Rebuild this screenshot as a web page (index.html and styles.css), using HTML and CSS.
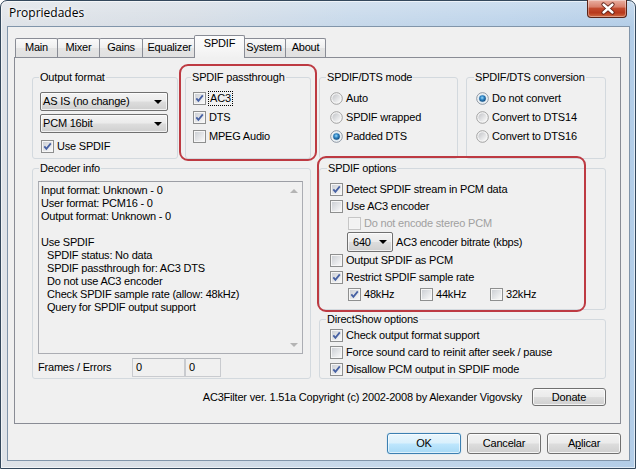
FILE: index.html
```html
<!DOCTYPE html>
<html>
<head>
<meta charset="utf-8">
<title>Propriedades</title>
<link rel="stylesheet" href="styles.css">
</head>
<body>
<svg class="defs" width="0" height="0" aria-hidden="true">
  <defs>
    <linearGradient id="cbg" x1="0" y1="0" x2="1" y2="1">
      <stop offset="0" stop-color="#cdd0d5"/>
      <stop offset="1" stop-color="#f8f8f8"/>
    </linearGradient>
    <linearGradient id="rbg" x1="0" y1="0" x2="1" y2="1">
      <stop offset="0" stop-color="#c3c5c9"/>
      <stop offset="1" stop-color="#fbfbfb"/>
    </linearGradient>
    <radialGradient id="rdot" cx="0.45" cy="0.4" r="0.65">
      <stop offset="0" stop-color="#9fdcfb"/>
      <stop offset="0.45" stop-color="#2f86c6"/>
      <stop offset="1" stop-color="#0c3c6c"/>
    </radialGradient>
  </defs>
</svg>

<div class="window">
  <div class="titlebar">
    <span class="title">Propriedades</span>
    <div class="close">
      <svg width="40" height="17" viewBox="0 0 40 17">
        <path d="M15.5 4.5 L24.5 12.5 M24.5 4.5 L15.5 12.5" stroke="#5b1c12" stroke-width="4.2" stroke-linecap="round" fill="none"/>
        <path d="M15.5 4.5 L24.5 12.5 M24.5 4.5 L15.5 12.5" stroke="#ffffff" stroke-width="2.4" stroke-linecap="round" fill="none"/>
      </svg>
    </div>
  </div>

  <div class="client">
    <div class="tabs">
      <div class="tab t-main">Main</div>
      <div class="tab t-mixer">Mixer</div>
      <div class="tab t-gains">Gains</div>
      <div class="tab t-eq">Equalizer</div>
      <div class="tab active t-spdif">SPDIF</div>
      <div class="tab t-system">System</div>
      <div class="tab t-about">About</div>
    </div>

    <div class="panel">
      <div class="main">
        <div class="col left">
          <div class="row row-left">
            <fieldset class="grp g-out">
              <legend class="lg-6">Output format</legend>
              <div class="body b-out">
                <div class="select s-wide"><span class="sel-text">AS IS (no change)</span><span class="arrow"></span></div>
                <div class="select s-wide s-second"><span class="sel-text">PCM 16bit</span><span class="arrow"></span></div>
                <div class="opt use-spdif">
                  <svg class="cb" viewBox="0 0 13 13"><rect x=".5" y=".5" width="12" height="12" fill="#f6f6f6" stroke="#8e8f8f"/><rect x="2" y="2" width="9" height="9" fill="url(#cbg)"/><path d="M3.3 6.4 5.4 8.9 9.8 3.4" fill="none" stroke="#4761a3" stroke-width="1.8"/></svg>
                  <span>Use SPDIF</span>
                </div>
              </div>
            </fieldset>
            <fieldset class="grp g-pass">
              <legend class="lg-5">SPDIF passthrough</legend>
              <div class="body b-pass">
                <div class="opt tall">
                  <svg class="cb" viewBox="0 0 13 13"><rect x=".5" y=".5" width="12" height="12" fill="#f6f6f6" stroke="#8e8f8f"/><rect x="2" y="2" width="9" height="9" fill="url(#cbg)"/><path d="M3.3 6.4 5.4 8.9 9.8 3.4" fill="none" stroke="#4761a3" stroke-width="1.8"/></svg>
                  <span class="focus">AC3</span>
                </div>
                <div class="opt tall">
                  <svg class="cb" viewBox="0 0 13 13"><rect x=".5" y=".5" width="12" height="12" fill="#f6f6f6" stroke="#8e8f8f"/><rect x="2" y="2" width="9" height="9" fill="url(#cbg)"/><path d="M3.3 6.4 5.4 8.9 9.8 3.4" fill="none" stroke="#4761a3" stroke-width="1.8"/></svg>
                  <span>DTS</span>
                </div>
                <div class="opt tall">
                  <svg class="cb" viewBox="0 0 13 13"><rect x=".5" y=".5" width="12" height="12" fill="#f6f6f6" stroke="#8e8f8f"/><rect x="2" y="2" width="9" height="9" fill="url(#cbg)"/></svg>
                  <span>MPEG Audio</span>
                </div>
              </div>
            </fieldset>
          </div>

          <fieldset class="grp g-dec">
            <legend class="lg-6">Decoder info</legend>
            <div class="body b-dec">
              <div class="memo">
                <div class="memo-text">
                  <div>Input format: Unknown - 0</div>
                  <div>User format: PCM16 - 0</div>
                  <div>Output format: Unknown - 0</div>
                  <div>&nbsp;</div>
                  <div>Use SPDIF</div>
                  <div class="ind6">SPDIF status: No data</div>
                  <div class="ind6">SPDIF passthrough for: AC3 DTS</div>
                  <div class="ind6">Do not use AC3 encoder</div>
                  <div class="ind6">Check SPDIF sample rate (allow: 48kHz)</div>
                  <div class="ind6">Query for SPDIF output support</div>
                </div>
                <div class="vscroll">
                  <div class="sbtn"><span class="up"></span></div>
                  <div class="sbtn"><span class="down"></span></div>
                </div>
              </div>
              <div class="frames">
                <span class="frames-label">Frames / Errors</span>
                <div class="edit e1">0</div>
                <div class="edit e2">0</div>
              </div>
            </div>
          </fieldset>
        </div>

        <div class="col right">
          <div class="row row-right">
            <fieldset class="grp g-mode">
              <legend class="lg-6">SPDIF/DTS mode</legend>
              <div class="body b-mode">
                <div class="opt tall">
                  <svg class="rb" viewBox="0 0 13 13"><circle cx="6.5" cy="6.5" r="5.8" fill="#f7f7f7" stroke="#979797" stroke-width="0.9"/><circle cx="6.5" cy="6.5" r="4.2" fill="url(#rbg)"/></svg>
                  <span>Auto</span>
                </div>
                <div class="opt tall">
                  <svg class="rb" viewBox="0 0 13 13"><circle cx="6.5" cy="6.5" r="5.8" fill="#f7f7f7" stroke="#979797" stroke-width="0.9"/><circle cx="6.5" cy="6.5" r="4.2" fill="url(#rbg)"/></svg>
                  <span>SPDIF wrapped</span>
                </div>
                <div class="opt tall">
                  <svg class="rb" viewBox="0 0 13 13"><circle cx="6.5" cy="6.5" r="5.8" fill="#f7f7f7" stroke="#7e8a98" stroke-width="0.9"/><circle cx="6.5" cy="6.5" r="4.2" fill="#cfe3f1"/><circle cx="6.5" cy="6.5" r="3.3" fill="url(#rdot)"/></svg>
                  <span>Padded DTS</span>
                </div>
              </div>
            </fieldset>
            <fieldset class="grp g-conv">
              <legend class="lg-7">SPDIF/DTS conversion</legend>
              <div class="body b-conv">
                <div class="opt tall">
                  <svg class="rb" viewBox="0 0 13 13"><circle cx="6.5" cy="6.5" r="5.8" fill="#f7f7f7" stroke="#7e8a98" stroke-width="0.9"/><circle cx="6.5" cy="6.5" r="4.2" fill="#cfe3f1"/><circle cx="6.5" cy="6.5" r="3.3" fill="url(#rdot)"/></svg>
                  <span>Do not convert</span>
                </div>
                <div class="opt tall">
                  <svg class="rb" viewBox="0 0 13 13"><circle cx="6.5" cy="6.5" r="5.8" fill="#f7f7f7" stroke="#979797" stroke-width="0.9"/><circle cx="6.5" cy="6.5" r="4.2" fill="url(#rbg)"/></svg>
                  <span>Convert to DTS14</span>
                </div>
                <div class="opt tall">
                  <svg class="rb" viewBox="0 0 13 13"><circle cx="6.5" cy="6.5" r="5.8" fill="#f7f7f7" stroke="#979797" stroke-width="0.9"/><circle cx="6.5" cy="6.5" r="4.2" fill="url(#rbg)"/></svg>
                  <span>Convert to DTS16</span>
                </div>
              </div>
            </fieldset>
          </div>

          <fieldset class="grp g-opts">
            <legend class="lg-7">SPDIF options</legend>
            <div class="body b-opts">
              <div class="opt">
                <svg class="cb" viewBox="0 0 13 13"><rect x=".5" y=".5" width="12" height="12" fill="#f6f6f6" stroke="#8e8f8f"/><rect x="2" y="2" width="9" height="9" fill="url(#cbg)"/><path d="M3.3 6.4 5.4 8.9 9.8 3.4" fill="none" stroke="#4761a3" stroke-width="1.8"/></svg>
                <span>Detect SPDIF stream in PCM data</span>
              </div>
              <div class="opt">
                <svg class="cb" viewBox="0 0 13 13"><rect x=".5" y=".5" width="12" height="12" fill="#f6f6f6" stroke="#8e8f8f"/><rect x="2" y="2" width="9" height="9" fill="url(#cbg)"/></svg>
                <span>Use AC3 encoder</span>
              </div>
              <div class="opt ind18 disabled">
                <svg class="cb" viewBox="0 0 13 13"><rect x=".5" y=".5" width="12" height="12" fill="#f4f4f4" stroke="#c6c6c6"/><rect x="2" y="2" width="9" height="9" fill="#f2f2f2"/></svg>
                <span>Do not encode stereo PCM</span>
              </div>
              <div class="opt bitrate">
                <div class="select s-small"><span class="sel-text">640</span><span class="arrow"></span></div>
                <span>AC3 encoder bitrate (kbps)</span>
              </div>
              <div class="opt">
                <svg class="cb" viewBox="0 0 13 13"><rect x=".5" y=".5" width="12" height="12" fill="#f6f6f6" stroke="#8e8f8f"/><rect x="2" y="2" width="9" height="9" fill="url(#cbg)"/></svg>
                <span>Output SPDIF as PCM</span>
              </div>
              <div class="opt">
                <svg class="cb" viewBox="0 0 13 13"><rect x=".5" y=".5" width="12" height="12" fill="#f6f6f6" stroke="#8e8f8f"/><rect x="2" y="2" width="9" height="9" fill="url(#cbg)"/><path d="M3.3 6.4 5.4 8.9 9.8 3.4" fill="none" stroke="#4761a3" stroke-width="1.8"/></svg>
                <span>Restrict SPDIF sample rate</span>
              </div>
              <div class="opt ind18 rates">
                <div class="rate r48">
                  <svg class="cb" viewBox="0 0 13 13"><rect x=".5" y=".5" width="12" height="12" fill="#f6f6f6" stroke="#8e8f8f"/><rect x="2" y="2" width="9" height="9" fill="url(#cbg)"/><path d="M3.3 6.4 5.4 8.9 9.8 3.4" fill="none" stroke="#4761a3" stroke-width="1.8"/></svg>
                  <span>48kHz</span>
                </div>
                <div class="rate r44">
                  <svg class="cb" viewBox="0 0 13 13"><rect x=".5" y=".5" width="12" height="12" fill="#f6f6f6" stroke="#8e8f8f"/><rect x="2" y="2" width="9" height="9" fill="url(#cbg)"/></svg>
                  <span>44kHz</span>
                </div>
                <div class="rate r32">
                  <svg class="cb" viewBox="0 0 13 13"><rect x=".5" y=".5" width="12" height="12" fill="#f6f6f6" stroke="#8e8f8f"/><rect x="2" y="2" width="9" height="9" fill="url(#cbg)"/></svg>
                  <span>32kHz</span>
                </div>
              </div>
            </div>
          </fieldset>

          <fieldset class="grp g-ds">
            <legend class="lg-6">DirectShow options</legend>
            <div class="body b-ds">
              <div class="opt">
                <svg class="cb" viewBox="0 0 13 13"><rect x=".5" y=".5" width="12" height="12" fill="#f6f6f6" stroke="#8e8f8f"/><rect x="2" y="2" width="9" height="9" fill="url(#cbg)"/><path d="M3.3 6.4 5.4 8.9 9.8 3.4" fill="none" stroke="#4761a3" stroke-width="1.8"/></svg>
                <span>Check output format support</span>
              </div>
              <div class="opt">
                <svg class="cb" viewBox="0 0 13 13"><rect x=".5" y=".5" width="12" height="12" fill="#f6f6f6" stroke="#8e8f8f"/><rect x="2" y="2" width="9" height="9" fill="url(#cbg)"/></svg>
                <span>Force sound card to reinit after seek / pause</span>
              </div>
              <div class="opt">
                <svg class="cb" viewBox="0 0 13 13"><rect x=".5" y=".5" width="12" height="12" fill="#f6f6f6" stroke="#8e8f8f"/><rect x="2" y="2" width="9" height="9" fill="url(#cbg)"/><path d="M3.3 6.4 5.4 8.9 9.8 3.4" fill="none" stroke="#4761a3" stroke-width="1.8"/></svg>
                <span>Disallow PCM output in SPDIF mode</span>
              </div>
            </div>
          </fieldset>
        </div>
      </div>

      <div class="footer">
        <span class="copyright">AC3Filter ver. 1.51a Copyright (c) 2002-2008 by Alexander Vigovsky</span>
        <div class="btn donate">Donate</div>
      </div>
    </div>

    <div class="buttons">
      <div class="btn default">OK</div>
      <div class="btn">Cancelar</div>
      <div class="btn">A<u>p</u>licar</div>
    </div>
  </div>
</div>

<div class="mark mark-pass"></div>
<div class="mark mark-opts"></div>
</body>
</html>
```

FILE: styles.css
```css
* { box-sizing: border-box; }

html, body {
  margin: 0;
  padding: 0;
}

body {
  width: 636px;
  height: 469px;
  overflow: hidden;
  font-family: "Liberation Sans", Arial, sans-serif;
  font-size: 11px;
  line-height: 13px;
  letter-spacing: -0.2px;
  color: #000;
  background: #ffffff;
}

.defs {
  position: absolute;
  width: 0;
  height: 0;
}

/* ---------- window frame ---------- */
.window {
  width: 636px;
  height: 469px;
  border: 1px solid #34485c;
  border-radius: 7px 7px 0 0;
  background:
    linear-gradient(to bottom, rgba(255,255,255,0.25), rgba(255,255,255,0) 26px),
    linear-gradient(to right, #dfe3e8 0%, #d6dde5 30%, #c6d8ea 55%, #bcd3ea 80%, #b3cde7 100%);
  box-shadow: inset 0 0 0 1px rgba(255,255,255,0.6);
  padding: 0 5px 7px 6px;
  display: flex;
  flex-direction: column;
}

.titlebar {
  height: 25px;
  display: flex;
  align-items: flex-start;
}

.title {
  font-family: "Open Sans", "Noto Sans", sans-serif;
  font-size: 12px;
  letter-spacing: 0;
  line-height: 16px;
  margin: 4px 0 0 2px;
  color: #000;
  text-shadow: 0 0 5px #ffffff, 0 0 3px #ffffff;
}

.close {
  margin: -1px 3px 0 auto;
  width: 40px;
  height: 18px;
  border: 1px solid #5a2418;
  border-top: none;
  border-radius: 0 0 4px 4px;
  background: linear-gradient(to bottom, #eab0a2 0%, #d9806c 40%, #c24a2e 50%, #b8391c 75%, #d06a43 100%);
  box-shadow: inset 0 0 0 1px rgba(255,255,255,0.35);
}

.close svg { display: block; }

/* ---------- client area ---------- */
.client {
  flex: 1;
  background: #f0f0f0;
  border: 1px solid #8195aa;
  display: flex;
  flex-direction: column;
}

.tabs {
  display: flex;
  align-items: flex-end;
  height: 22px;
  margin: 8px 0 0 7px;
}

.tab {
  height: 19px;
  border: 1px solid #898c95;
  border-bottom: none;
  border-radius: 2px 2px 0 0;
  margin-right: -1px;
  background: linear-gradient(to bottom, #fafafa 0%, #efefef 50%, #e4e4e4 51%, #e1e1e1 100%);
  text-align: center;
  line-height: 17px;
  flex: none;
}

.t-main { width: 43px; }
.t-mixer { width: 43px; }
.t-gains { width: 44px; }
.t-eq { width: 55px; }
.t-system { width: 44px; }
.t-about { width: 41px; }

.tab.active {
  width: 51px;
  height: 23px;
  margin: 0 -3px -1px -2px;
  position: relative;
  z-index: 1;
  background: linear-gradient(to bottom, #fdfdfd 0%, #f6f6f6 60%, #f0f0f0 100%);
  line-height: 15px;
}

.panel {
  height: 367px;
  margin: 0 8px 0 6px;
  border: 1px solid #898c95;
  padding: 13px 14px 0 17px;
  display: flex;
  flex-direction: column;
  background: #f0f0f0;
}

.main {
  display: flex;
  gap: 8px;
}

.col {
  display: flex;
  flex-direction: column;
  gap: 3px;
}

.col.left { width: 279px; }
.col.right { flex: 1; }

.row {
  display: flex;
  height: 88px;
}

.row-left { gap: 7px; }
.row-right { gap: 8px; }

/* ---------- group boxes ---------- */
.grp {
  margin: 0;
  padding: 0;
  min-width: 0;
  border: 1px solid #d3d9de;
  border-radius: 3px;
}

.grp legend {
  padding: 0 1px;
  line-height: 13px;
}

.lg-5 { margin-left: 5px; }
.lg-6 { margin-left: 6px; }
.lg-7 { margin-left: 7px; }

.g-out { width: 146px; }
.g-pass { flex: 1; }
.g-mode { width: 139px; }
.g-conv { flex: 1; }
.g-dec { flex: 1; }
.g-ds { flex: 1; }

.b-out { padding: 8px 0 0 7px; }
.b-pass { padding: 5px 0 0 7px; }
.b-mode { padding: 5px 0 0 10px; }
.b-conv { padding: 5px 0 0 9px; }
.b-dec { padding: 6px 7px 0 5px; }
.b-opts { padding: 6px 0 6px 10px; }
.b-ds { padding: 1px 0 0 10px; }

/* ---------- options ---------- */
.opt {
  display: flex;
  align-items: center;
  height: 17px;
  white-space: nowrap;
}

.opt.tall { height: 19px; }

.cb, .rb {
  width: 13px;
  height: 13px;
  flex: none;
  margin-right: 3px;
  display: block;
}

.use-spdif {
  margin-top: 5px;
  padding-left: 1px;
}

.focus {
  outline: 1px dotted #000;
  outline-offset: 0;
  padding: 0 1px;
}

.ind18 { padding-left: 18px; }

.disabled { color: #a0a0a0; }

.bitrate {
  height: 20px;
  padding-left: 17px;
}

.rate {
  display: flex;
  align-items: center;
}

.r48 { width: 72px; }
.r44 { width: 70px; }

/* ---------- combo boxes ---------- */
.select {
  height: 19px;
  border: 1px solid #707070;
  border-radius: 2px;
  background: linear-gradient(to bottom, #f3f3f3 0%, #ebebeb 48%, #dddddd 52%, #cfcfcf 100%);
  box-shadow: inset 0 0 0 1px rgba(255,255,255,0.7);
  display: flex;
  align-items: center;
  padding: 0 5px 0 2px;
  flex: none;
}

.sel-text { flex: 1; }

.s-wide { width: 128px; }
.s-second { margin-top: 3px; }

.s-small {
  width: 46px;
  height: 20px;
  margin-right: 3px;
  padding-left: 5px;
}

.arrow {
  width: 0;
  height: 0;
  border-left: 4px solid transparent;
  border-right: 4px solid transparent;
  border-top: 4px solid #000;
}

/* ---------- decoder info memo ---------- */
.memo {
  height: 173px;
  border: 1px solid #abadb3;
  border-top-color: #9c9ea5;
  background: #f0f0f0;
  display: flex;
}

.memo-text {
  flex: 1;
  padding: 2px 0 0 2px;
  white-space: nowrap;
}

.ind6 { padding-left: 6px; }

.vscroll {
  width: 17px;
  display: flex;
  flex-direction: column;
  justify-content: space-between;
}

.sbtn {
  height: 17px;
  display: flex;
  align-items: center;
  justify-content: center;
}

.up {
  width: 0;
  height: 0;
  border-left: 4px solid transparent;
  border-right: 4px solid transparent;
  border-bottom: 4px solid #b4b4b4;
}

.down {
  width: 0;
  height: 0;
  border-left: 4px solid transparent;
  border-right: 4px solid transparent;
  border-top: 4px solid #b4b4b4;
}

.frames {
  display: flex;
  align-items: center;
  height: 19px;
  margin-top: 4px;
}

.frames-label { width: 94px; }

.edit {
  height: 19px;
  border: 1px solid #c9cbcf;
  border-top-color: #b5b8bd;
  background: #f0f0f0;
  padding: 0 0 0 3px;
  line-height: 17px;
}

.e1 { width: 53px; }
.e2 { width: 36px; }

/* ---------- footer + buttons ---------- */
.footer {
  display: flex;
  justify-content: flex-end;
  align-items: center;
  gap: 10px;
  height: 18px;
  margin-top: 9px;
}

.btn {
  height: 21px;
  width: 74px;
  border: 1px solid #707070;
  border-radius: 3px;
  background: linear-gradient(to bottom, #f2f2f2 0%, #ebebeb 48%, #dddddd 52%, #cfcfcf 100%);
  box-shadow: inset 0 0 0 1px rgba(255,255,255,0.75);
  text-align: center;
  line-height: 19px;
  flex: none;
}

.donate {
  height: 18px;
  line-height: 16px;
}

.btn.default {
  border-color: #3c7fb1;
  background: linear-gradient(to bottom, #eaf6fd 0%, #d9f0fc 48%, #bee6fd 52%, #a7d9f5 100%);
  box-shadow: inset 0 0 0 1px rgba(255,255,255,0.6), 0 0 1px #6fc0ef;
}

.buttons {
  display: flex;
  justify-content: flex-end;
  gap: 6px;
  margin: 9px 8px 0 0;
}

/* ---------- red annotation marks drawn over the screenshot ---------- */
.mark {
  position: absolute;
  border: 2px solid #bd3a42;
  border-radius: 9px;
  pointer-events: none;
}

.mark-pass {
  left: 179px;
  top: 64px;
  width: 138px;
  height: 97px;
}

.mark-opts {
  left: 317px;
  top: 156px;
  width: 269px;
  height: 156px;
}
```
